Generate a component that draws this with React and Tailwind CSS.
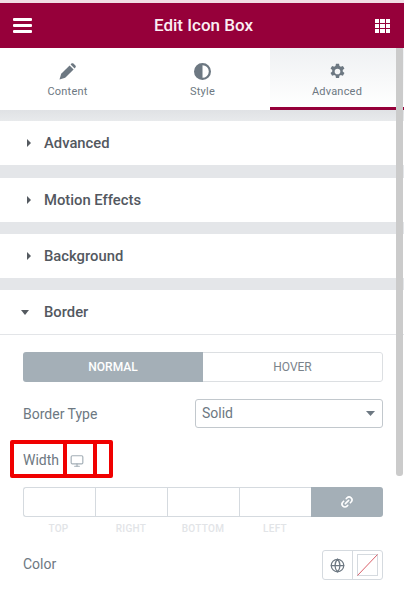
import React from 'react';
import { Globe, Monitor, Link2 } from 'lucide-react';

const Caret = ({ open }) => (
  <svg width="8" height="8" viewBox="0 0 8 8" className="text-[#555a60]" fill="currentColor">
    {open ? <path d="M0 2h8L4 7z" /> : <path d="M2 0l4 4-4 4z" />}
  </svg>
);

const Section = ({ title, open, gap = 'h-[13px]' }) => (
  <>
    <div className={`h-[44px] bg-white flex items-center ${open ? 'border-b border-[#e3e5e8] h-[45px] pl-[21px]' : 'pl-[25px]'}`}>
      <div className={`flex items-center ${open ? 'w-[23px]' : 'w-[19px]'}`}>
        <Caret open={open} />
      </div>
      <span className="text-[14.8px] font-medium text-[#53585f]">{title}</span>
    </div>
    {!open && <div className={`${gap} bg-[#e4e6e9]`} />}
  </>
);

const Tab = ({ label, active, width, children }) => (
  <div className={`${width} flex flex-col items-center pt-[13px] ${active ? 'bg-gradient-to-b from-[#eff1f3] to-white border-b-[3px] border-[#96003a]' : 'bg-white'}`}>
    <div className="h-[20px] flex items-center justify-center text-[#6d7882]">{children}</div>
    <span className="text-[11px] mt-[3px] text-[#6d7882] tracking-[0.2px]">{label}</span>
  </div>
);

const GRID = [0, 1, 2];

export default function App() {
  return (
    <div className="relative w-[404px] h-[594px] overflow-hidden bg-white font-['Roboto',sans-serif]">
      <div className="h-[3px] bg-[#f0dde4]" />
      {/* Header */}
      <div className="h-[45px] bg-[#96003a] flex items-center justify-between pl-[13px] pr-[14px] text-white">
        <div className="flex flex-col gap-[3px] w-[19px]">
          <div className="h-[3px] bg-white rounded-[1px]" />
          <div className="h-[3px] bg-white rounded-[1px]" />
          <div className="h-[3px] bg-white rounded-[1px]" />
        </div>
        <span className="text-[17px] font-medium text-[#fbeef3]">Edit Icon Box</span>
        <div className="grid grid-cols-3 gap-[1px] w-[15px]">
          {GRID.flatMap((r) => GRID.map((c) => <div key={`${r}${c}`} className="h-[4px] bg-white" />))}
        </div>
      </div>

      {/* Tabs */}
      <div className="flex h-[62px]">
        <Tab label="Content" width="w-[135px]">
          <svg width="17" height="17" viewBox="0 0 17 17" fill="currentColor">
            <path d="M0.5 16.5L2.2 10.8 10.6 2.4 14.6 6.4 6.2 14.8z" />
            <path d="M11.6 1.4L12.4 0.6C13 0 13.8 0 14.4 0.6L16.4 2.6C17 3.2 17 4 16.4 4.6L15.6 5.4z" />
          </svg>
        </Tab>
        <Tab label="Style" width="w-[135px]">
          <svg width="17" height="17" viewBox="0 0 17 17" fill="currentColor">
            <path fillRule="evenodd" d="M8.5 0a8.5 8.5 0 1 0 0 17 8.5 8.5 0 0 0 0-17zm0 2.2v12.6a6.3 6.3 0 0 0 0-12.6z" />
          </svg>
        </Tab>
        <Tab label="Advanced" active width="flex-1">
          <svg width="17" height="17" viewBox="0 0 24 24" fill="currentColor">
            <path fillRule="evenodd" d="M14.2 1h-4.4l-.6 3.2c-.6.2-1.2.6-1.7 1L4.4 4.1 2.2 7.9l2.4 2.1a8 8 0 0 0 0 2l-2.4 2.1 2.2 3.8 3.1-1.1c.5.4 1.1.8 1.7 1l.6 3.2h4.4l.6-3.2c.6-.2 1.2-.6 1.7-1l3.1 1.1 2.2-3.8-2.4-2.1a8 8 0 0 0 0-2l2.4-2.1-2.2-3.8-3.1 1.1c-.5-.4-1.1-.8-1.7-1zM12 8a4 4 0 1 1 0 8 4 4 0 0 1 0-8z" />
          </svg>
        </Tab>
      </div>
      <div className="h-[11px] bg-gradient-to-b from-[#e0e2e5] to-[#e8eaec]" />

      {/* Panels */}
      <Section title="Advanced" />
      <Section title="Motion Effects" gap="h-[12px]" />
      <Section title="Background" gap="h-[12px]" />
      <Section title="Border" open />

      <div className="pl-[23px] pr-[21px] pt-[17px]">
        <div className="flex h-[30px] text-[12px] font-medium rounded-[3px] overflow-hidden">
          <div className="w-[180px] bg-[#a4afb7] text-white flex items-center justify-center">NORMAL</div>
          <div className="flex-1 border border-l-0 border-[#dcdfe2] rounded-r-[3px] text-[#7a838b] font-normal flex items-center justify-center">HOVER</div>
        </div>

        <div className="flex items-center justify-between mt-[17px] h-[29px]">
          <span className="text-[14px] text-[#6d7882] pt-[1px]">Border Type</span>
          <div className="w-[188px] h-[29px] border border-[#c2c8cd] rounded-[3px] flex items-center justify-between pl-[6px] pr-[7px]">
            <span className="text-[14px] text-[#6d7882]">Solid</span>
            <svg width="9" height="5" viewBox="0 0 9 5" fill="#6d7882"><path d="M0 0h9L4.5 5z" /></svg>
          </div>
        </div>

        <div className="flex items-center mt-[21px] h-[20px]">
          <span className="text-[14px] text-[#6d7882] pt-[2px]">Width</span>
          <Monitor size={14} className="ml-[11px] mt-[3px] text-[#a4afb7]" />
        </div>

        {/* Dimension inputs */}
        <div className="flex h-[30px] mt-[18px]">
          <div className="w-[72px] border border-r-0 border-[#d5dadf] rounded-l-[3px]" />
          <div className="w-[72px] border border-r-0 border-[#d5dadf]" />
          <div className="w-[72px] border border-r-0 border-[#d5dadf]" />
          <div className="w-[72px] border-y border-l border-[#d5dadf]" />
          <div className="flex-1 bg-[#a4afb7] rounded-r-[3px] flex items-center justify-center">
            <Link2 size={14} className="text-white -rotate-45" strokeWidth={2.6} />
          </div>
        </div>
        <div className="flex mt-[4px] text-[10px] font-medium text-[#e2e4e7] tracking-[0.3px]">
          <span className="w-[72px] text-center pr-[1px]">TOP</span>
          <span className="w-[72px] text-center">RIGHT</span>
          <span className="w-[72px] text-center">BOTTOM</span>
          <span className="w-[72px] text-center">LEFT</span>
        </div>

        <div className="flex items-center justify-between mt-[14px] h-[30px]">
          <span className="text-[14px] text-[#6d7882] pb-[1px]">Color</span>
          <div className="flex h-[30px] w-[61px] border border-[#d5dadf] rounded-[3px]">
            <div className="w-[30px] border-r border-[#d5dadf] flex items-center justify-center text-[#6d7882]">
              <Globe size={15} />
            </div>
            <div className="flex-1 flex items-center justify-center">
              <svg width="21" height="22" viewBox="0 0 21 22" fill="none">
                <rect x="0.5" y="0.5" width="20" height="21" stroke="#d5dadf" />
                <path d="M0.5 21.5L20.5 0.5" stroke="#d9606a" />
              </svg>
            </div>
          </div>
        </div>
      </div>

      {/* Scrollbar */}
      <div className="absolute left-[396px] top-[48px] w-[7px] h-[428px] bg-[#cbcbcb] rounded-b-[3px]" />

      {/* Red annotation boxes */}
      <div className="absolute left-[10px] top-[440px] w-[103px] h-[38px] border-[4px] border-[#f00000] rounded-[2px]" />
      <div className="absolute left-[63px] top-[440px] w-[34px] h-[38px] border-x-[4px] border-[#f00000]" />
    </div>
  );
}
